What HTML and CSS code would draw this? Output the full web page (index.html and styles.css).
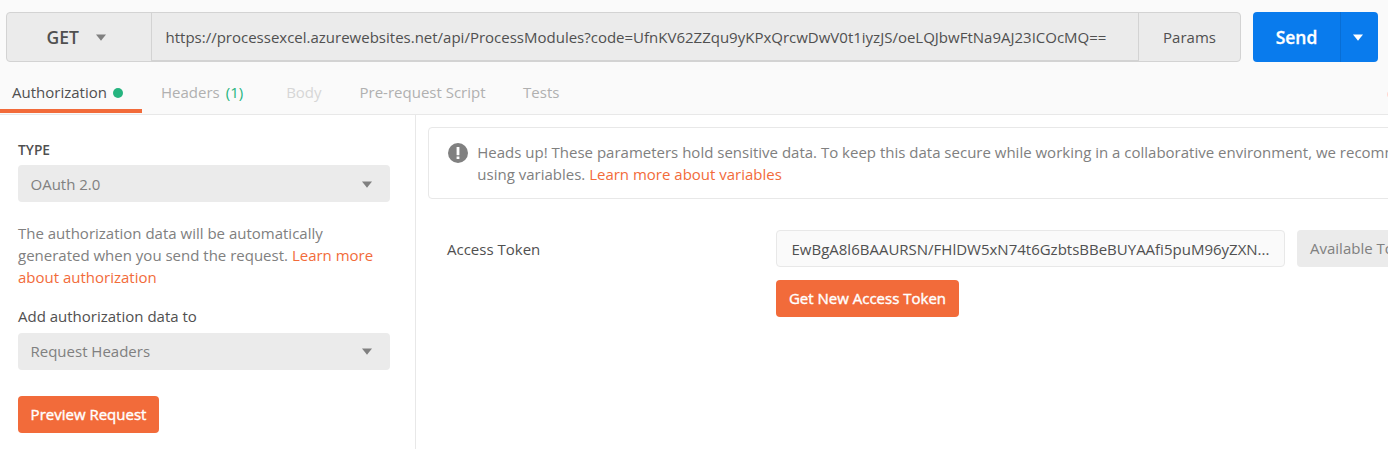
FILE: index.html
```html
<!DOCTYPE html>
<html lang="en">
<head>
<meta charset="utf-8">
<title>Request builder</title>
<link rel="stylesheet" href="styles.css">
</head>
<body>
<header class="request">
  <div class="request-bar">
    <div class="request-group">
      <button class="method"><span>GET</span><svg class="caret" viewBox="0 0 10 7"><path d="M0 0.5H10L5 6.8Z"/></svg></button>
      <div class="url"><span class="url-text">https://processexcel.azurewebsites.net/api/ProcessModules?code=UfnKV62ZZqu9yKPxQrcwDwV0t1iyzJS/oeLQJbwFtNa9AJ23ICOcMQ==</span></div>
      <button class="params">Params</button>
    </div>
    <div class="send-group">
      <button class="send">Send</button>
      <button class="send-more" aria-label="Send options"><svg class="caret" viewBox="0 0 10 7"><path d="M0 0.5H10L5 6.8Z"/></svg></button>
    </div>
  </div>
  <nav class="tabs">
    <a class="tab active">Authorization<span class="dot"></span></a>
    <a class="tab headers">Headers<span class="count">(1)</span></a>
    <a class="tab disabled">Body</a>
    <a class="tab script">Pre-request Script</a>
    <a class="tab">Tests</a>
    <span class="edge-dot"></span>
  </nav>
</header>
<main class="content">
  <aside class="sidebar">
    <h2 class="type-label">TYPE</h2>
    <div class="select auth-type"><span>OAuth 2.0</span><svg class="caret" viewBox="0 0 10 7"><path d="M0 0.5H10L5 6.8Z"/></svg></div>
    <p class="description">The authorization data will be automatically generated when you send the request. <a class="link">Learn more about authorization</a></p>
    <div class="add-label">Add authorization data to</div>
    <div class="select target"><span>Request Headers</span><svg class="caret" viewBox="0 0 10 7"><path d="M0 0.5H10L5 6.8Z"/></svg></div>
    <button class="button preview">Preview Request</button>
  </aside>
  <section class="panel">
    <div class="notice">
      <svg class="notice-icon" viewBox="0 0 20 20"><circle cx="10" cy="10" r="10"/><path d="M8.6 4H11.4V12.2H8.6ZM8.6 13.5H11.4V16H8.6Z"/></svg>
      <p class="notice-text">Heads up! These parameters hold sensitive data. To keep this data secure while working in a collaborative environment, we recommend<br>using variables. <a class="link">Learn more about variables</a></p>
    </div>
    <div class="token-row">
      <label class="token-label">Access Token</label>
      <div class="token-fields">
        <div class="token-line">
          <div class="token-input">EwBgA8l6BAAURSN/FHlDW5xN74t6GzbtsBBeBUYAAfi5puM96yZXN...</div>
          <button class="available">Available Tokens</button>
        </div>
        <button class="button get-token">Get New Access Token</button>
      </div>
    </div>
  </section>
</main>
</body>
</html>
```
FILE: styles.css
```css
* { box-sizing: border-box; }
html { overflow: hidden; }
body {
  margin: 0;
  height: 449px;
  overflow: hidden;
  display: flex;
  flex-direction: column;
  background: #fff;
  color: #505050;
  font: 15px/22px "Open Sans", sans-serif;
}
button {
  border: 0;
  padding: 0;
  background: none;
  color: inherit;
  font: inherit;
}
.caret { width: 10px; height: 7px; fill: #808080; flex: none; }
.link { color: #f26b3a; }

.request {
  flex: none;
  height: 115px;
  padding-top: 12px;
  background: #fafafa;
  border-bottom: 1px solid #e8e8e8;
}
.request-bar { display: flex; gap: 12px; padding-left: 6px; height: 50px; }
.request-group {
  display: flex;
  width: 1235px;
  background: #ebebeb;
  border: 1px solid #d3d3d3;
  border-radius: 4px;
}
.method {
  width: 144px;
  display: flex;
  align-items: center;
  gap: 17px;
  padding-left: 39.5px;
  font-size: 17.5px;
  font-weight: 600;
}
.url {
  width: 988px;
  display: flex;
  align-items: center;
  padding: 1px 0 0 13.5px;
  border: solid #d3d3d3;
  border-width: 0 1px 1px;
  white-space: nowrap;
}
.params { flex: 1; }
.send-group {
  display: flex;
  width: 125px;
  background: #097bed;
  border-radius: 4px;
  color: #fff;
}
.send {
  width: 87px;
  font-size: 17.5px;
  font-weight: 600;
  -webkit-text-stroke: 0.3px #fff;
}
.send-more {
  flex: 1;
  display: flex;
  align-items: center;
  justify-content: center;
  padding-right: 3px;
  border-left: 1px solid #086ed5;
}
.send-more .caret { fill: #fff; }

.tabs {
  position: relative;
  display: flex;
  height: 51px;
  padding-top: 9px;
  color: #b0b0b0;
}
.tab { display: flex; line-height: 43px; margin-right: 37px; }
.tab.active {
  width: 142px;
  margin-right: 19px;
  padding: 4px 0 0 12px;
  align-items: center;
  gap: 6px;
  height: 42px;
  line-height: 34px;
  border-bottom: 4px solid #f26b3a;
  color: #505050;
}
.dot { width: 10px; height: 10px; margin-top: 2px; border-radius: 50%; background: #26b47f; }
.headers { gap: 6px; margin-right: 43px; }
.count { color: #26b47f; }
.disabled { color: #d6d6d6; margin-right: 38px; }
.script { margin-right: 37.5px; }
.edge-dot {
  position: absolute;
  top: 29px;
  right: -6px;
  width: 7px;
  height: 7px;
  border-radius: 50%;
  background: #ffd6d0;
}

.content { flex: 1; display: flex; min-height: 0; }
.sidebar {
  flex: none;
  width: 416px;
  padding: 24px 25px 0 18px;
  border-right: 1px solid #e8e8e8;
}
.type-label { margin: 0 0 4px; font-size: 13.75px; font-weight: 600; }
.select {
  display: flex;
  align-items: center;
  justify-content: space-between;
  height: 37px;
  padding: 0 18px 0 12.5px;
  background: #ebebeb;
  border-radius: 4px;
  color: #808080;
}
.auth-type .caret { margin-top: 2px; }
.target span { padding-bottom: 2px; }
.description { margin: 20px 0 17px; color: #808080; }
.add-label { margin-bottom: 6px; }
.button {
  display: block;
  height: 37px;
  padding-bottom: 2px;
  border-radius: 4px;
  background: #f26b3a;
  color: #fff;
  -webkit-text-stroke: 0.4px #fff;
}
.preview { width: 141px; margin-top: 26px; }

.panel { flex: 1; min-width: 0; padding: 12px 0 0 12px; overflow: hidden; }
.notice {
  display: flex;
  gap: 9px;
  width: 1100px;
  height: 72px;
  padding: 14px 19px;
  border: 1px solid #e8e8e8;
  border-radius: 4px;
  color: #808080;
}
.notice-icon { flex: none; width: 20px; height: 20px; margin-top: 1px; fill: #808080; }
.notice-icon path { fill: #fff; }
.notice-text { margin: -1px 0 0 0.3px; white-space: nowrap; }
.token-row { display: flex; padding: 31px 0 0 19px; }
.token-label { width: 329px; line-height: 38px; flex: none; }
.token-line { display: flex; gap: 12px; margin-bottom: 13px; }
.token-input {
  flex: none;
  width: 509px;
  height: 37px;
  padding: 1px 14.5px;
  line-height: 35px;
  background: #fafafa;
  border: 1px solid #e8e8e8;
  border-radius: 4px;
  white-space: nowrap;
}
.available {
  flex: none;
  width: 150px;
  height: 37px;
  background: #ebebeb;
  border-radius: 4px;
  color: #808080;
  padding: 0 0 2px 13px;
  text-align: left;
}
.get-token { width: 183px; }
```
